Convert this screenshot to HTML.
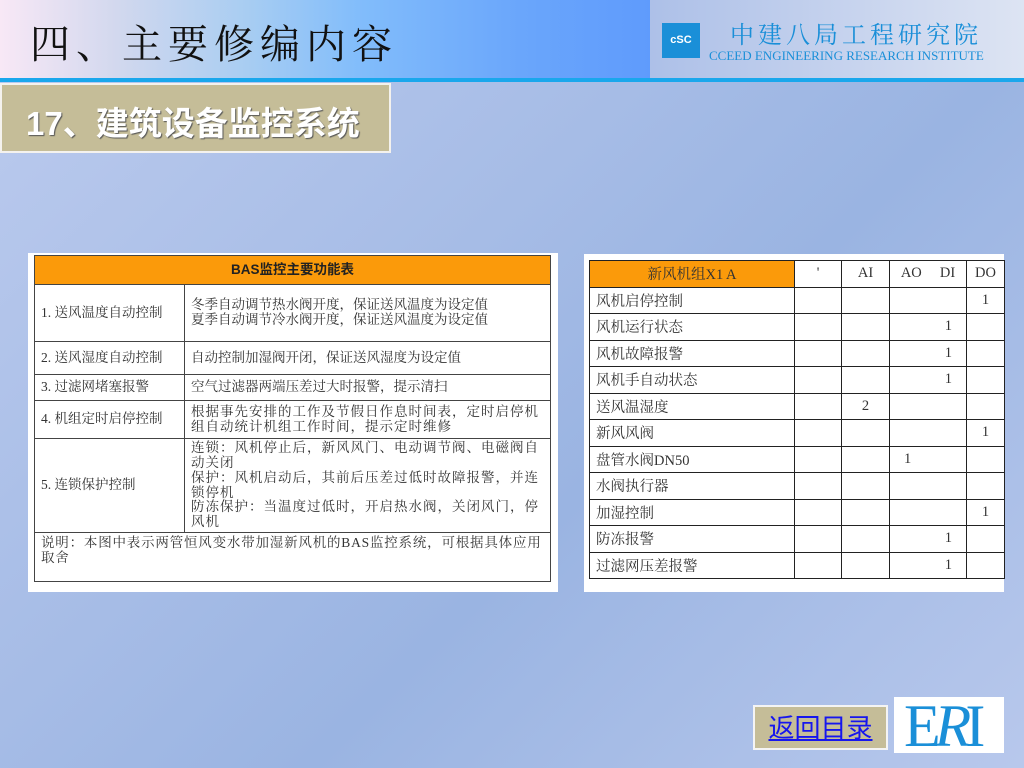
<!DOCTYPE html>
<html><head><meta charset="utf-8"><style>
*{margin:0;padding:0;box-sizing:border-box}
body{width:1024px;height:768px;overflow:hidden;position:relative;font-family:"Liberation Serif","Noto Serif CJK SC",serif;
background:linear-gradient(135deg,#bccbee 0%,#a6bce6 40%,#9ab4e2 60%,#b8c8ec 100%)}
.a{position:absolute}
.hdr{left:0;top:0;width:650px;height:78px;background:linear-gradient(90deg,#f8e8f6 0%,#d2d8ee 18%,#a8cdf2 38%,#82bdfb 55%,#6aa6fb 80%,#5f9bfc 100%)}
.hdr2{left:650px;top:0;width:374px;height:78px;background:linear-gradient(90deg,#adc0e8,#dde4f3)}
.line{left:0;top:78px;width:1024px;height:4px;background:#1aa7ec}
.t1{left:30px;top:14px;font-size:40px;letter-spacing:6px;color:#111;font-family:"Noto Serif CJK SC",serif;line-height:56px}
.sec{left:0;top:83px;width:391px;height:70px;background:#c5bd98;border:2px solid #f4f2ee;color:#fff;font:bold 33px "Liberation Sans","Noto Sans CJK SC",sans-serif;padding:12px 0 0 24px;text-shadow:1px 1px 1px #555;white-space:nowrap}
table{border-collapse:collapse;font-family:"Liberation Serif","Noto Serif CJK SC",serif;color:#333}
.tb1{left:28px;top:253px;width:530px;height:339px;background:#fff}
.tb1 table{position:absolute;left:6px;top:2px;width:517px}
.tb1 td{border:1px solid #444;font-size:13.5px;line-height:14.7px;padding:0 6px;vertical-align:middle;white-space:nowrap}
.w td+td{letter-spacing:1px}
.tb2{left:584px;top:254px;width:420px;height:338px;background:#fff}
.tb2 table{position:absolute;left:5px;top:6px;width:416px}
.tb2 td{border:1px solid #222;font-size:14.5px;height:26.5px;padding:0 6px;text-align:center}
.tb2 td:first-child{text-align:left;padding-left:6px}
.or{background:#fb9a0a}
.back{left:753px;top:705px;width:135px;height:45px;background:#c5bd98;border:2px solid #f4f4f4;text-align:center;font:26px "Noto Sans CJK SC",sans-serif;color:#1616ee;text-decoration:underline;line-height:40px}
.eri{left:894px;top:697px;width:110px;height:56px;background:#fff;color:#1a8fd8;font:60px "Liberation Serif",serif;line-height:58px;padding-left:10px;letter-spacing:-6px;overflow:hidden}
</style></head><body>
<div class="a hdr"></div><div class="a hdr2"></div><div class="a line"></div>
<div class="a t1">四、主要修编内容</div>
<div class="a" style="left:662px;top:23px;width:38px;height:35px;background:#1a8fd8;color:#fff;font:bold 11px 'Liberation Sans',sans-serif;text-align:center;line-height:35px">cSC</div>
<div class="a" style="left:730px;top:18px;font:24px 'Noto Serif CJK SC',serif;color:#1a8fd8;letter-spacing:4px;line-height:30px">中建八局工程研究院</div>
<div class="a" style="left:709px;top:48px;font:13px 'Liberation Serif',serif;color:#1a8fd8;line-height:16px;white-space:nowrap">CCEED ENGINEERING RESEARCH INSTITUTE</div>
<div class="a sec">17、建筑设备监控系统</div>

<div class="a tb1"><table>
<tr style="height:29px"><td colspan="2" class="or" style="text-align:center;font-weight:bold;font-family:'Liberation Sans','Noto Sans CJK SC',sans-serif;color:#222">BAS监控主要功能表</td></tr>
<tr style="height:57px"><td style="width:150px">1. 送风温度自动控制</td><td>冬季自动调节热水阀开度，保证送风温度为设定值<br>夏季自动调节冷水阀开度，保证送风温度为设定值</td></tr>
<tr style="height:33px"><td>2. 送风湿度自动控制</td><td>自动控制加湿阀开闭，保证送风湿度为设定值</td></tr>
<tr style="height:26px"><td>3. 过滤网堵塞报警</td><td>空气过滤器两端压差过大时报警，提示清扫</td></tr>
<tr style="height:38px" class="w"><td>4. 机组定时启停控制</td><td>根据事先安排的工作及节假日作息时间表，定时启停机<br>组自动统计机组工作时间，提示定时维修</td></tr>
<tr style="height:94px" class="w"><td>5. 连锁保护控制</td><td>连锁：风机停止后，新风风门、电动调节阀、电磁阀自<br>动关闭<br>保护：风机启动后，其前后压差过低时故障报警，并连<br>锁停机<br>防冻保护：当温度过低时，开启热水阀，关闭风门，停<br>风机</td></tr>
<tr style="height:49px"><td colspan="2" style="vertical-align:top;padding-top:3px;letter-spacing:0.8px">说明：本图中表示两管恒风变水带加湿新风机的BAS监控系统，可根据具体应用<br>取舍</td></tr>
</table></div>

<div class="a tb2"><table>
<tr><td class="or" style="width:205px;text-align:center">新风机组X1 A</td><td style="width:47px">'</td><td style="width:48px">AI</td><td style="width:77px">AO &nbsp; &nbsp; DI</td><td>DO</td></tr>
<tr><td>风机启停控制</td><td></td><td></td><td></td><td>1</td></tr>
<tr><td>风机运行状态</td><td></td><td></td><td style="text-align:right;padding-right:14px">1</td><td></td></tr>
<tr><td>风机故障报警</td><td></td><td></td><td style="text-align:right;padding-right:14px">1</td><td></td></tr>
<tr><td>风机手自动状态</td><td></td><td></td><td style="text-align:right;padding-right:14px">1</td><td></td></tr>
<tr><td>送风温湿度</td><td></td><td>2</td><td></td><td></td></tr>
<tr><td>新风风阀</td><td></td><td></td><td></td><td>1</td></tr>
<tr><td>盘管水阀DN50</td><td></td><td></td><td style="text-align:left;padding-left:14px">1</td><td></td></tr>
<tr><td>水阀执行器</td><td></td><td></td><td></td><td></td></tr>
<tr><td>加湿控制</td><td></td><td></td><td></td><td>1</td></tr>
<tr><td>防冻报警</td><td></td><td></td><td style="text-align:right;padding-right:14px">1</td><td></td></tr>
<tr><td>过滤网压差报警</td><td></td><td></td><td style="text-align:right;padding-right:14px">1</td><td></td></tr>
</table></div>

<div class="a back">返回目录</div>
<div class="a eri">E<i>R</i>I</div>
</body></html>
